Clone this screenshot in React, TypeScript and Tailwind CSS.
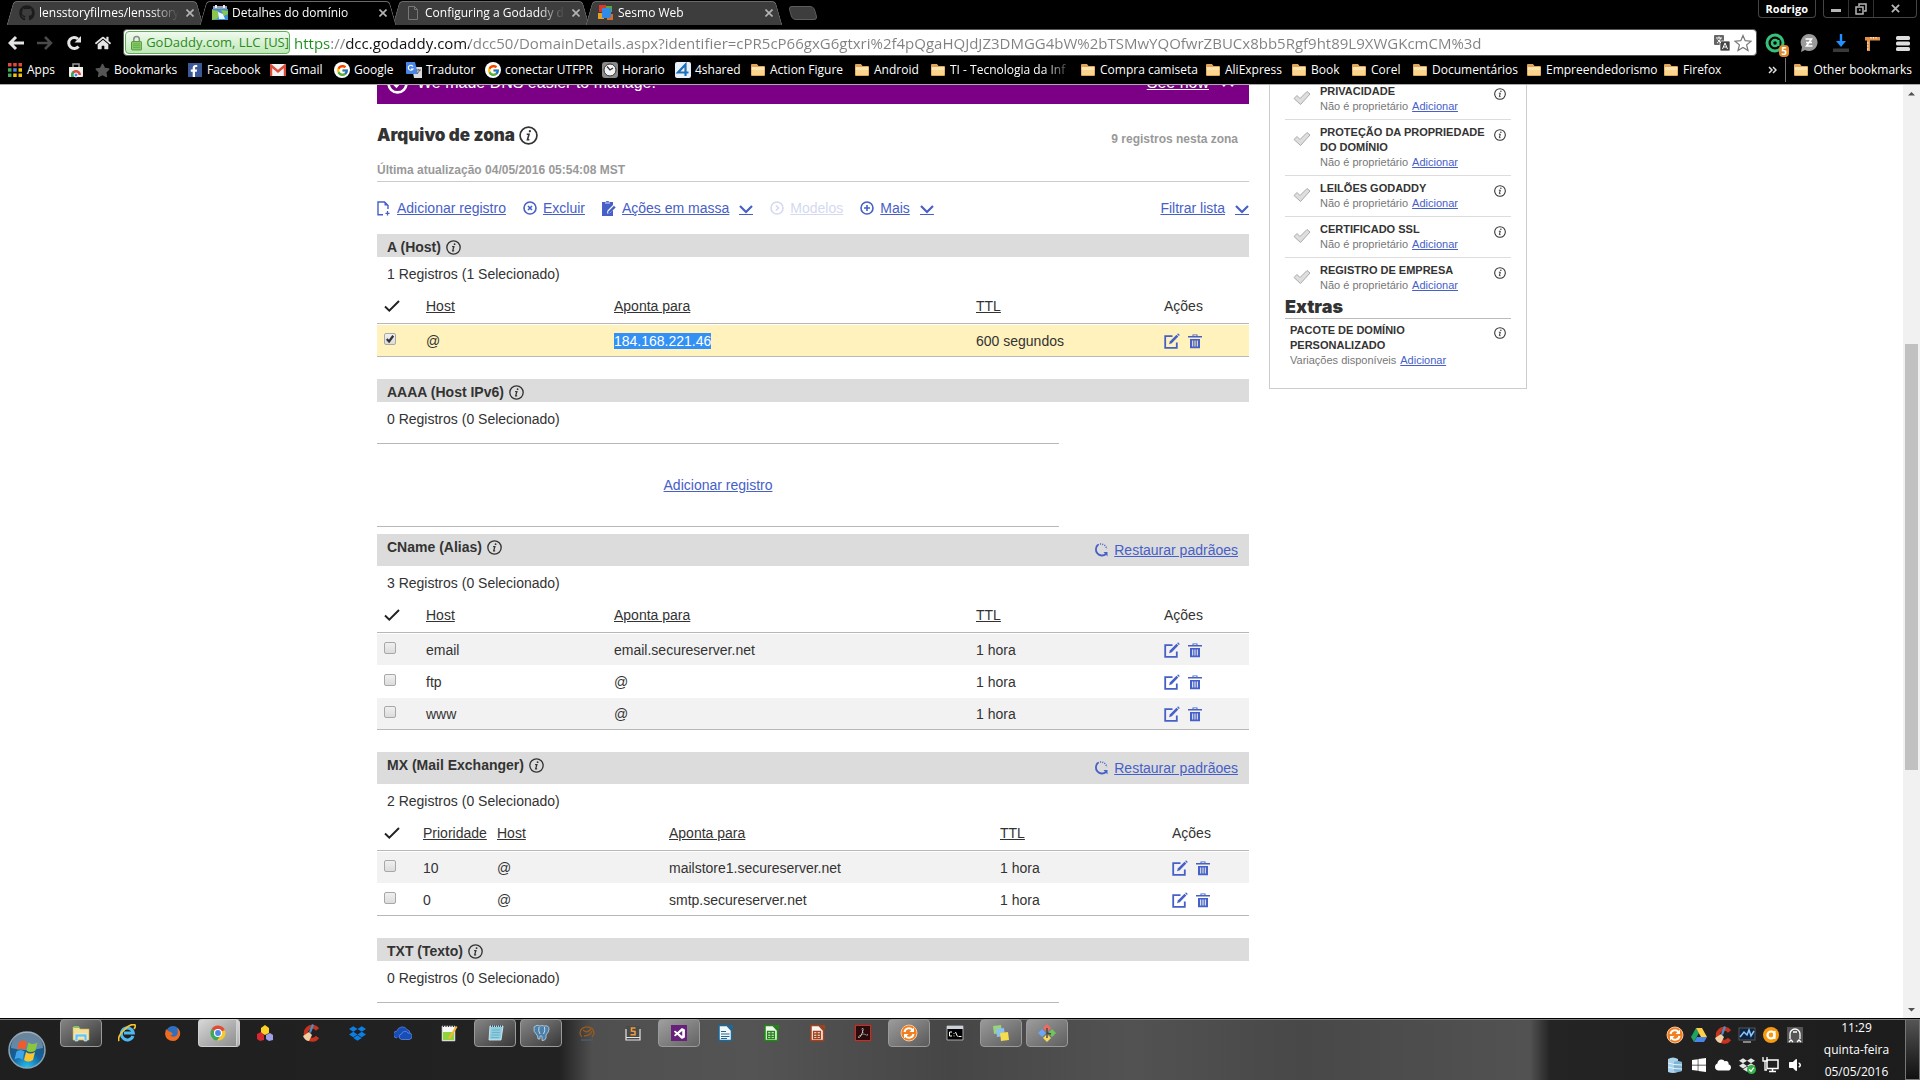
import React from 'react';
import { FaGithub, FaWindows, FaStar, FaFacebookF, FaDropbox, FaHome, FaCloud, FaVolumeDown } from 'react-icons/fa';
import { FcGoogle } from 'react-icons/fc';
import { SiAdobeacrobatreader } from 'react-icons/si';
import { BiLogoVisualStudio } from 'react-icons/bi';

/* ---------- shared icons ---------- */

const Info = ({ className }: { className: string }) => (
  <svg viewBox="0 0 18 18" className={className} fill="none" stroke="#333" aria-hidden="true">
    <circle cx="9" cy="9" r="8" strokeWidth="1.6" />
    <path d="M7.3 7.8h2.2L8 13h1.8" strokeWidth="1.5" />
    <circle cx="10.3" cy="5" r="1.1" fill="#333" stroke="none" />
  </svg>
);

const Chevron = () => (
  <svg viewBox="0 0 14 10" className="mt-1 h-[10px] w-[14px]" fill="none" stroke="currentColor" aria-hidden="true">
    <path d="M1 1l6 6 6-6" strokeWidth="2.2" />
    <path d="M0 9.5h14" strokeWidth="1" />
  </svg>
);

const Edit = () => (
  <svg viewBox="0 0 16 16" className="size-4" fill="none" stroke="#4660c8" aria-hidden="true">
    <path d="M8.5 3.2H1.2v11.6h11.6V9.5" strokeWidth="1.8" />
    <path d="M5 11.3l1-3 6.5-6.5 1.8 1.8L7.8 10.2z" fill="#4660c8" stroke="none" />
    <path d="M13.2 1.2l.8-.9 1.8 1.8-.9.8z" fill="#4660c8" stroke="none" />
  </svg>
);

const Trash = () => (
  <svg viewBox="0 0 14 16" className="h-4 w-[14px]" fill="#4660c8" aria-hidden="true">
    <path d="M4.5 1.5h5V3H14v1.6H0V3h4.5zM5.5 2.3V3h3v-.7z" fillRule="evenodd" />
    <path d="M2 6h10v9.3H2zM4.2 7.5v6h1v-6zm2.3 0v6h1v-6zm2.3 0v6h1v-6z" fillRule="evenodd" />
  </svg>
);

const HeadCheck = () => (
  <svg viewBox="0 0 16 12" className="h-3 w-4" fill="none" stroke="#222" strokeWidth="2" aria-hidden="true">
    <path d="M1 6.5L5.3 10.6 15 1" />
  </svg>
);

const Folder = () => (
  <svg viewBox="0 0 16 16" className="size-4" aria-hidden="true">
    <path d="M1 3q0-1 1-1h5l1.5 2H14q1 0 1 1v8q0 1-1 1H2q-1 0-1-1z" fill="#e0a55a" />
    <path d="M1.8 5h12.4v8H1.8z" fill="#fcd58f" />
    <path d="M1.8 5h12.4v3H1.8z" fill="#fee5b0" />
  </svg>
);

/* ---------- browser tabs ---------- */

const MapIcon = () => (
  <svg viewBox="0 0 16 16" className="size-4" aria-hidden="true">
    <path d="M1 1h14v3H1z" fill="#9aa3ad" />
    <path d="M3 0h2v3H3zM11 0h2v3h-2z" fill="#eef" />
    <path d="M0 4h16v11H0z" fill="#3a8fd8" />
    <path d="M0 5l6 1 2 3-3 5-5 1zM9 5l7 1v3l-4 2z" fill="#8cc34a" />
    <path d="M6 7l5 2 2 5H7z" fill="#e8f4ff" />
  </svg>
);
const PageIcon = () => (
  <svg viewBox="0 0 16 16" className="size-4" fill="none" stroke="#777" aria-hidden="true">
    <path d="M3.5 1.5h6l3 3v10h-9zM9.5 1.5v3h3" />
  </svg>
);
const CubesIcon = () => (
  <svg viewBox="0 0 16 16" className="size-4" aria-hidden="true">
    <path d="M1 0h7v7H1z" fill="#d9382b" />
    <path d="M0 8h6v6H0z" fill="#e8a020" />
    <path d="M9 9h6v6H9z" fill="#e06a1c" />
    <path d="M8 1h6v6H8z" fill="#5aa63a" />
    <rect x="4" y="3" width="9" height="10" rx="1" fill="#2f8be6" />
  </svg>
);

const tabs = [
  { title: 'lensstoryfilmes/lensstoryfil', icon: <FaGithub className="size-4 text-[#1c1c1c]" />, active: false },
  { title: 'Detalhes do domínio', icon: <MapIcon />, active: true },
  { title: 'Configuring a Godaddy do', icon: <PageIcon />, active: false },
  { title: 'Sesmo Web', icon: <CubesIcon />, active: false },
];

const tabShape =
  "relative isolate -mr-[5px] flex h-6 w-[198px] items-center pl-[13px] pr-2 before:absolute before:inset-y-0 before:left-1 before:-z-10 before:w-1/2 before:-skew-x-[16deg] before:rounded-tl before:border-l before:border-t before:border-[#6a6a6a] before:content-[''] after:absolute after:inset-y-0 after:right-1 after:-z-10 after:w-1/2 after:skew-x-[16deg] after:rounded-tr after:border-r after:border-t after:border-[#6a6a6a] after:content-['']";

const TabStrip = () => (
  <div className="flex h-[29px] items-start justify-between pl-[6px] pr-[3px]">
    <div className="flex pt-px" role="tablist">
      {tabs.map((t) => (
        <div
          key={t.title}
          className={
            tabShape +
            (t.active ? ' z-10 before:bg-black after:bg-black' : ' before:bg-[#3d3d3d] after:bg-[#3d3d3d]')
          }
        >
          {t.icon}
          <button
            role="tab"
            aria-selected={t.active}
            className="ml-1 w-[140px] overflow-hidden whitespace-nowrap text-left text-[12px] leading-5 text-white [mask-image:linear-gradient(90deg,#000_80%,transparent)]"
          >
            {t.title}
          </button>
          <button aria-label={'Fechar ' + t.title} className="ml-[7px] text-[#b5b5b5]">
            <svg viewBox="0 0 8 8" className="size-2" stroke="currentColor" strokeWidth="1.6">
              <path d="M.5.5l7 7M7.5.5l-7 7" />
            </svg>
          </button>
        </div>
      ))}
      <button
        aria-label="Nova guia"
        className="ml-3 mt-[5px] h-[14px] w-[26px] skew-x-[16deg] rounded-sm border border-[#5c5c5c] bg-[#3d3d3d]"
      />
    </div>
    <div className="flex gap-[7px]">
      <button className="h-[18px] rounded-b border border-t-0 border-[#444] px-[7px] text-[11px] font-bold leading-4 text-white">
        Rodrigo
      </button>
      <div className="flex h-[18px] divide-x divide-[#333] rounded-b border border-t-0 border-[#444] text-[#b5b5b5]">
        <button aria-label="Minimizar" className="flex w-[25px] items-center justify-center">
          <svg viewBox="0 0 10 10" className="size-[10px]" fill="currentColor">
            <path d="M0 5h10v3H0z" />
          </svg>
        </button>
        <button aria-label="Restaurar" className="flex w-[25px] items-center justify-center">
          <svg viewBox="0 0 12 12" className="size-3" fill="none" stroke="currentColor" strokeWidth="1.5">
            <path d="M4 3V1h7v7H9M1 4h7v7H1z" />
            <path d="M4 7h1.5" />
          </svg>
        </button>
        <button aria-label="Fechar" className="flex w-[42px] items-center justify-center">
          <svg viewBox="0 0 10 10" className="size-[9px]" stroke="currentColor" strokeWidth="2">
            <path d="M1 1l8 8M9 1L1 9" />
          </svg>
        </button>
      </div>
    </div>
  </div>
);

/* ---------- address bar ---------- */

const url =
  'https://dcc.godaddy.com/dcc50/DomainDetails.aspx?identifier=cPR5cP66gxG6gtxri%2f4pQgaHQJdJZ3DMGG4bW%2bTSMwYQOfwrZBUCx8bb5Rgf9ht89L9XWGKcmCM%3d';

const Toolbar = () => (
  <div className="flex h-[27px] items-center">
    <div className="flex w-[123px] items-center gap-[13px] pl-2 text-[#e4e4e4]">
      <button aria-label="Voltar">
        <svg viewBox="0 0 16 16" className="size-4" fill="none" stroke="currentColor" strokeWidth="3">
          <path d="M16 8H3M8 2L2 8l6 6" />
        </svg>
      </button>
      <button aria-label="Avançar" className="text-[#4a4a4a]">
        <svg viewBox="0 0 16 16" className="size-4" fill="none" stroke="currentColor" strokeWidth="2.5">
          <path d="M0 8h13M8 2l6 6-6 6" />
        </svg>
      </button>
      <button aria-label="Recarregar">
        <svg viewBox="0 0 16 16" className="size-4" fill="none" stroke="currentColor" strokeWidth="3">
          <path d="M12.5 11.5A5.5 5.5 0 1 1 12 4" />
          <path d="M15 1v6.500H8.500z" fill="currentColor" stroke="none" />
        </svg>
      </button>
      <button aria-label="Página inicial">
        <FaHome className="size-4" />
      </button>
    </div>
    <div className="flex h-[27px] min-w-0 flex-1 items-center rounded-sm border border-[#555] bg-white pl-px pr-1">
      <button className="flex h-[23px] w-[165px] shrink-0 items-center gap-1 whitespace-nowrap rounded-sm border border-[#5fae5a] bg-linear-to-b from-[#f0faef] to-[#bfe8b8] pl-[5px] text-[13px] text-[#2b8a22]">
        <svg viewBox="0 0 12 16" className="h-4 w-3" aria-hidden="true">
          <path d="M3 7V4a3 3 0 0 1 6 0v3" fill="none" stroke="#8a8a8a" strokeWidth="1.6" />
          <rect x=".5" y="6.5" width="11" height="9" rx="1" fill="#8bd06a" stroke="#4c8f38" />
          <path d="M2 9h8M2 11h8M2 13h8" stroke="#5fa848" />
        </svg>
        GoDaddy.com, LLC [US]
      </button>
      <input
        aria-label="Endereço"
        defaultValue={url}
        className="ml-1 h-6 min-w-0 flex-1 bg-[linear-gradient(90deg,#1a8f1a_0_37px,#808080_37px_52px,#111_52px_175px,#808080_175px)] bg-clip-text text-[15px] text-transparent outline-none"
      />
      <button aria-label="Traduzir" className="mr-1">
        <svg viewBox="0 0 16 16" className="size-4">
          <rect width="10" height="10" rx="1" fill="#666" />
          <rect x="6" y="6" width="10" height="10" rx="1" fill="#444" stroke="#fff" strokeWidth=".7" />
          <path d="M2 3h6M5 1.5V3M3 8c2-1 3-3 3.5-5M3.5 4.5L7 8" stroke="#fff" fill="none" />
          <path d="M8.5 14l2.5-6 2.5 6M9.5 12h3" stroke="#fff" fill="none" />
        </svg>
      </button>
      <button aria-label="Favoritar">
        <svg viewBox="0 0 18 18" className="size-[18px]" fill="none" stroke="#777" strokeWidth="1.2">
          <path d="M9 1.5l2.200 5.200 5.800.5-4.400 3.700 1.400 5.600L9 13.500l-5 3 1.400-5.600L1 7.200l5.800-.5z" />
        </svg>
      </button>
    </div>
    <div className="flex w-[163px] items-center justify-between pl-2 pr-[10px]">
      <button aria-label="Avast" className="relative">
        <svg viewBox="0 0 20 20" className="size-5" fill="none" stroke="#35c178">
          <circle cx="10" cy="10" r="8" strokeWidth="3" />
          <circle cx="10" cy="10" r="3" strokeWidth="2.5" />
          <path d="M13.5 7v6" strokeWidth="2" />
        </svg>
        <span className="absolute -bottom-1 -right-1 h-3 w-[10px] rounded-sm bg-[#e08a2e] text-center text-[10px] font-bold leading-3 text-white">
          5
        </span>
      </button>
      <button aria-label="Zotero">
        <svg viewBox="0 0 18 18" className="size-[18px]">
          <path d="M9 0a8.500 8.500 0 1 1-4 16L1 18l1-5A8.500 8.500 0 0 1 9 0z" fill="#9a9a9a" />
          <path d="M5.500 5h6l-5 7h6M6 8.500h6" stroke="#fff" strokeWidth="1.6" fill="none" />
        </svg>
      </button>
      <button aria-label="Downloads">
        <svg viewBox="0 0 16 18" className="h-[18px] w-4">
          <path d="M6.800 0h2.400v7H13l-5 6-5-6h3.800z" fill="#1e90ff" />
          <path d="M0 14.500h16V18H0z" fill="#3a3a3a" />
        </svg>
      </button>
      <button aria-label="Régua">
        <svg viewBox="0 0 18 18" className="size-[18px]">
          <path d="M2 3h15v3.500H7V17H4V6.500H2z" fill="#e09347" />
          <path d="M8 3v1.500M10.500 3v1.500M13 3v1.500M4 9h1.500M4 12h1.500M4 15h1.500" stroke="#fff" />
        </svg>
      </button>
      <button aria-label="Menu">
        <svg viewBox="0 0 14 16" className="h-4 w-[14px]" fill="#dedede">
          <rect y="1" width="14" height="4" rx="1.5" />
          <rect y="6.500" width="14" height="4" rx="1.5" />
          <rect y="12" width="14" height="4" rx="1.5" />
        </svg>
      </button>
    </div>
  </div>
);

/* ---------- bookmarks ---------- */

const AppsIcon = () => (
  <svg viewBox="0 0 14 14" className="size-[14px]" aria-hidden="true">
    <path d="M0 0h3.500v3.500H0zM5.200 0h3.500v3.500H5.200zM10.500 0H14v3.500h-3.500z" fill="#e5493a" />
    <path d="M0 5.200h3.500v3.500H0z" fill="#3fae5a" />
    <path d="M5.200 5.200h3.500v3.500H5.200z" fill="#4a86e8" />
    <path d="M10.500 5.200H14v3.500h-3.500zM5.200 10.500h3.500V14H5.200zM10.500 10.500H14V14h-3.500z" fill="#f4c20d" />
    <path d="M0 10.500h3.500V14H0z" fill="#3fae5a" />
  </svg>
);
const StoreIcon = () => (
  <svg viewBox="0 0 16 16" className="size-4" aria-hidden="true">
    <path d="M1 5h14v9q0 1-1 1H2q-1 0-1-1z" fill="#eee" />
    <path d="M5 5V2h6v3" fill="none" stroke="#999" strokeWidth="1.5" />
    <path d="M3 13a5 5 0 0 1 10 0z" fill="#de4c3c" />
    <path d="M3 15v-2a5 5 0 0 1 2-4l2 6z" fill="#39a657" />
    <circle cx="8" cy="13" r="2" fill="#4a86e8" stroke="#fff" />
  </svg>
);
const GmailIcon = () => (
  <svg viewBox="0 0 16 12" className="h-3 w-4" aria-hidden="true">
    <path d="M0 0h16v12H0z" fill="#f3f3f3" />
    <path d="M1 12V1.500l7 6 7-6V12" fill="none" stroke="#dd4b39" strokeWidth="2.400" />
  </svg>
);
const GoogleIcon = () => (
  <span className="flex size-4 items-center justify-center rounded-full bg-white">
    <FcGoogle className="size-[13px]" />
  </span>
);
const TranslateIcon = () => (
  <svg viewBox="0 0 16 16" className="size-4" aria-hidden="true">
    <path d="M6 5h10v11H8z" fill="#dcdcdc" />
    <path d="M0 0h9l3 12H1q-1 0-1-1z" fill="#4a86e8" />
    <path d="M7 4.500a2.500 2.500 0 1 0 0 2.500H5" fill="none" stroke="#fff" strokeWidth="1.200" />
    <path d="M10 8h5M12.500 7v1M11 12l3-4" stroke="#666" fill="none" />
  </svg>
);
const ClockIcon = () => (
  <svg viewBox="0 0 16 16" className="size-4" aria-hidden="true">
    <rect width="16" height="16" rx="3" fill="#8a8a8a" />
    <circle cx="8" cy="8" r="6" fill="#f3f3f3" stroke="#333" />
    <path d="M5 4.500L8 8l3-2" fill="none" stroke="#333" strokeWidth="1.300" />
  </svg>
);
const FourIcon = () => (
  <svg viewBox="0 0 16 16" className="size-4" aria-hidden="true">
    <rect width="16" height="16" rx="2" fill="#e8f1fa" />
    <path d="M10.500 14V2.500L3 10.500h10.500" fill="none" stroke="#1f6fb8" strokeWidth="2.200" />
  </svg>
);

const bookmarks = [
  { t: 'Apps', w: 'w-[61px]', i: <AppsIcon /> },
  { t: '', w: 'w-[26px]', i: <StoreIcon /> },
  { t: 'Bookmarks', w: 'w-[93px]', i: <FaStar className="size-[15px] text-[#555]" /> },
  {
    t: 'Facebook',
    w: 'w-[83px]',
    i: (
      <span className="flex size-[14px] items-end justify-end bg-[#3b5998] pr-[2px]">
        <FaFacebookF className="size-3 text-white" />
      </span>
    ),
  },
  { t: 'Gmail', w: 'w-[64px]', i: <GmailIcon /> },
  { t: 'Google', w: 'w-[72px]', i: <GoogleIcon /> },
  { t: 'Tradutor', w: 'w-[79px]', i: <TranslateIcon /> },
  { t: 'conectar UTFPR', w: 'w-[117px]', i: <GoogleIcon /> },
  { t: 'Horario', w: 'w-[73px]', i: <ClockIcon /> },
  { t: '4shared', w: 'w-[75px]', i: <FourIcon /> },
  { t: 'Action Figure', w: 'w-[104px]', i: <Folder /> },
  { t: 'Android', w: 'w-[76px]', i: <Folder /> },
  { t: 'TI - Tecnologia da Inf', w: 'w-[150px]', i: <Folder />, fade: true },
  { t: 'Compra camiseta', w: 'w-[125px]', i: <Folder /> },
  { t: 'AliExpress', w: 'w-[86px]', i: <Folder /> },
  { t: 'Book', w: 'w-[60px]', i: <Folder /> },
  { t: 'Corel', w: 'w-[61px]', i: <Folder /> },
  { t: 'Documentários', w: 'w-[114px]', i: <Folder /> },
  { t: 'Empreendedorismo', w: 'w-[137px]', i: <Folder /> },
  { t: 'Firefox', w: 'w-[70px]', i: <Folder /> },
];

const Bookmarks = () => (
  <nav aria-label="Favoritos" className="flex h-7 items-center justify-between pl-[7px] pr-2 text-[12px] text-white">
    <div className="flex min-w-0 overflow-hidden">
      {bookmarks.map((b, n) => (
        <a
          key={n}
          href="#"
          aria-label={b.t || 'Chrome Web Store'}
          className={'flex shrink-0 items-center gap-1 whitespace-nowrap ' + b.w}
        >
          <span className="flex w-4 shrink-0 justify-center">{b.i}</span>
          <span className={b.fade ? 'w-[124px] overflow-hidden [mask-image:linear-gradient(90deg,#000_75%,transparent)]' : ''}>
            {b.t}
          </span>
        </a>
      ))}
    </div>
    <div className="flex shrink-0 items-center">
      <button aria-label="Mais favoritos" className="mr-2 text-[#e0e0e0]">
        <svg viewBox="0 0 9 8" className="h-2 w-[9px]" fill="none" stroke="currentColor" strokeWidth="1.5">
          <path d="M1 1l3 3-3 3M5 1l3 3-3 3" />
        </svg>
      </button>
      <a href="#" className="flex items-center gap-1 whitespace-nowrap border-l border-[#777] pl-[7px] leading-6">
        <Folder />
        Other bookmarks
      </a>
    </div>
  </nav>
);

/* ---------- zone file ---------- */

type Section = {
  title: string;
  total: number;
  selected: number;
  restore?: boolean;
  cols: { label: string; w: string }[];
  rows: string[][];
};

const hostCols = [
  { label: 'Host', w: 'w-[188px]' },
  { label: 'Aponta para', w: 'w-[362px]' },
  { label: 'TTL', w: 'w-[188px]' },
];

const sections: Section[] = [
  { title: 'A (Host)', total: 1, selected: 1, cols: hostCols, rows: [['@', '184.168.221.46', '600 segundos']] },
  { title: 'AAAA (Host IPv6)', total: 0, selected: 0, cols: [], rows: [] },
  {
    title: 'CName (Alias)',
    total: 3,
    selected: 0,
    restore: true,
    cols: hostCols,
    rows: [
      ['email', 'email.secureserver.net', '1 hora'],
      ['ftp', '@', '1 hora'],
      ['www', '@', '1 hora'],
    ],
  },
  {
    title: 'MX (Mail Exchanger)',
    total: 2,
    selected: 0,
    restore: true,
    cols: [
      { label: 'Prioridade', w: 'w-[74px]' },
      { label: 'Host', w: 'w-[172px]' },
      { label: 'Aponta para', w: 'w-[331px]' },
      { label: 'TTL', w: 'w-[172px]' },
    ],
    rows: [
      ['10', '@', 'mailstore1.secureserver.net', '1 hora'],
      ['0', '@', 'smtp.secureserver.net', '1 hora'],
    ],
  },
  { title: 'TXT (Texto)', total: 0, selected: 0, cols: [], rows: [] },
];

const Check = ({ label, checked }: { label: string; checked: boolean }) => (
  <label className="relative ml-[7px] block size-3">
    <input
      type="checkbox"
      aria-label={label}
      defaultChecked={checked}
      className="peer block size-3 appearance-none rounded-[2px] border border-[#a8a8a8] bg-linear-to-b from-[#f0f0f0] to-[#dcdcdc]"
    />
    <svg
      viewBox="0 0 13 13"
      className="pointer-events-none absolute inset-0 hidden size-3 peer-checked:block"
      fill="none"
      stroke="#333"
      strokeWidth="2.4"
    >
      <path d="M3 6.5l2.500 2.700L10 3" />
    </svg>
  </label>
);

const RecordTable = ({ s }: { s: Section }) => {
  const mx = s.cols.length === 4;
  return (
    <table className="w-full table-fixed border-separate border-spacing-0 border-b border-[#b8b8b8] text-left">
      <thead>
        <tr className="h-[35px]">
          <th className={'border-b border-[#b8b8b8] pl-[7px] ' + (mx ? 'w-[46px]' : 'w-[49px]')} aria-label="Selecionar">
            <HeadCheck />
          </th>
          {s.cols.map((c) => (
            <th key={c.label} className={'border-b border-[#b8b8b8] font-normal ' + c.w}>
              <a href="#" className="underline">{c.label}</a>
            </th>
          ))}
          <th className="border-b border-[#b8b8b8] font-normal">Ações</th>
        </tr>
      </thead>
      <tbody>
        {s.rows.map((r, i) => {
          const sel = i < s.selected;
          return (
            <tr key={i} className={'h-8 *:border-t *:border-white ' + (sel ? 'bg-[#fff2bd]' : i % 2 === 0 ? 'bg-[#f2f2f2]' : 'bg-white')}>
              <td className="pb-1">
                <Check label={'Selecionar ' + r.join(' ')} checked={sel} />
              </td>
              {r.map((v, k) => (
                <td key={k}>{sel && k === 1 ? <span className="bg-[#3390f5] text-white">{v}</span> : v}</td>
              ))}
              <td>
                <div className="flex items-center gap-2">
                  <button aria-label="Editar"><Edit /></button>
                  <button aria-label="Excluir"><Trash /></button>
                </div>
              </td>
            </tr>
          );
        })}
      </tbody>
    </table>
  );
};

const SectionBlock = ({ s }: { s: Section }) => (
  <section className={s.rows.length ? 'mb-[22px]' : 'mb-[7px]'}>
    <div className={'flex items-start justify-between bg-[#dcdcdc] pl-[10px] pr-[11px] ' + (s.restore ? 'h-8' : 'h-[23px]')}>
      <h3 className="flex items-center gap-[5px] pt-[3px] font-bold">
        {s.title}
        <Info className="size-[15px]" />
      </h3>
      {s.restore && (
        <button className="flex items-center gap-[6px] pt-[6px] text-[#4660c8]">
          <svg viewBox="0 0 14 14" className="size-[14px]" fill="none" stroke="currentColor" aria-hidden="true">
            <path d="M4 1.800A6 6 0 1 0 12 11" strokeWidth="1.800" />
            <path d="M4 1.800A6 6 0 0 1 12.800 6" strokeWidth="1.500" strokeDasharray="1 1.200" />
            <path d="M9.500 9h4v4.500z" fill="currentColor" stroke="none" />
          </svg>
          <span className="underline">Restaurar padrãoes</span>
        </button>
      )}
    </div>
    <p className={'pl-[10px] pt-[7px] ' + (s.rows.length ? 'h-8' : 'h-[41px]')}>
      {s.total} Registros ({s.selected} Selecionado)
    </p>
    {s.rows.length ? (
      <RecordTable s={s} />
    ) : (
      <div className="mr-[190px] flex h-[84px] items-center justify-center border-y border-[#b8b8b8]">
        <a href="#" className="text-[#4660c8] underline">Adicionar registro</a>
      </div>
    )}
  </section>
);

const ZoneFile = () => (
  <main className="min-w-0 flex-1 text-[14px] leading-5 text-[#333]">
    <div className="flex h-[19px] items-end justify-between overflow-hidden bg-[#7b0085] pb-[9px] pl-[10px] pr-[15px] text-[16px] leading-6 text-white">
      <div className="flex items-center gap-[9px]">
        <svg viewBox="0 0 20 20" className="size-[21px]" fill="none" stroke="#fff" aria-hidden="true">
          <circle cx="10" cy="10" r="8.5" strokeWidth="2.5" />
          <path d="M6 10l3 3 5-6" strokeWidth="2" />
        </svg>
        We made DNS easier to manage.
      </div>
      <div className="flex items-center gap-[13px]">
        <a href="#" className="underline">See now</a>
        <button aria-label="Dispensar" className="mb-1">
          <svg viewBox="0 0 12 12" className="size-3" stroke="#fff" strokeWidth="2.5">
            <path d="M1 1l10 10M11 1L1 11" />
          </svg>
        </button>
      </div>
    </div>
    <header className="flex h-[78px] flex-col justify-between border-b border-[#ccc] pb-px pt-[19px]">
      <div className="flex items-center justify-between">
        <h1 className="flex items-center gap-1 font-['Inter'] text-[17px] font-black leading-6">
          Arquivo de zona
          <Info className="size-[19px]" />
        </h1>
        <span className="mt-2 pr-[11px] text-[12px] font-bold leading-4 text-[#999]">9 registros nesta zona</span>
      </div>
      <p className="text-[12px] font-bold text-[#999]">Última atualização 04/05/2016 05:54:08 MST</p>
    </header>
    <div className="flex h-[52px] items-center justify-between text-[#4660c8]">
      <div className="flex items-center gap-[17px]">
        <button className="flex items-center gap-[7px]">
          <svg viewBox="0 0 13 15" className="h-[15px] w-[13px]" fill="none" stroke="currentColor" aria-hidden="true">
            <path d="M6 13.800H1V1h6.500L11 4.500V8" strokeWidth="1.400" />
            <path d="M7.500.5v4h4z" fill="currentColor" stroke="none" />
            <path d="M10.500 10v4.500M8.500 12.300h4" strokeWidth="1.300" />
          </svg>
          <span className="underline">Adicionar registro</span>
        </button>
        <button className="flex items-center gap-[6px]">
          <svg viewBox="0 0 14 14" className="size-[14px]" fill="none" stroke="currentColor" strokeWidth="1.6" aria-hidden="true">
            <circle cx="7" cy="7" r="6" />
            <path d="M5 5l4 4M9 5L5 9" />
          </svg>
          <span className="underline">Excluir</span>
        </button>
        <button className="flex items-center gap-[6px]">
          <svg viewBox="0 0 14 15" className="h-[15px] w-[14px]" fill="currentColor" aria-hidden="true">
            <path d="M0 1h3.500q.5-1 2-1t2 1H11v3L5.500 9.500 5 12.500l3-.5 3-3v6H0z" />
            <path d="M6.500 10.200L12 4.700l1.700 1.700-5.500 5.400-2.200.5z" />
            <path d="M3 2h5" stroke="#fff" strokeWidth=".8" />
          </svg>
          <span className="mr-1 underline">Ações em massa</span>
          <Chevron />
        </button>
        <button disabled className="flex items-center gap-[6px] text-[#d3daf1]">
          <svg viewBox="0 0 14 14" className="size-[14px]" fill="none" stroke="currentColor" strokeWidth="1.6" aria-hidden="true">
            <circle cx="7" cy="7" r="6" />
            <path d="M6 4.500L8.500 7 6 9.500" />
          </svg>
          <span className="underline">Modelos</span>
        </button>
        <button className="flex items-center gap-[6px]">
          <svg viewBox="0 0 14 14" className="size-[14px]" fill="none" stroke="currentColor" strokeWidth="1.6" aria-hidden="true">
            <circle cx="7" cy="7" r="6" />
            <path d="M7 4v6M4 7h6" />
          </svg>
          <span className="mr-1 underline">Mais</span>
          <Chevron />
        </button>
      </div>
      <button className="flex items-center gap-[10px]">
        <span className="underline">Filtrar lista</span>
        <Chevron />
      </button>
    </div>
    {sections.map((s) => (
      <SectionBlock key={s.title} s={s} />
    ))}
  </main>
);

/* ---------- sidebar ---------- */

const products = ['PRIVACIDADE', 'PROTEÇÃO DA PROPRIEDADE DO DOMÍNIO', 'LEILÕES GODADDY', 'CERTIFICADO SSL', 'REGISTRO DE EMPRESA'];

const Sidebar = () => (
  <aside className="-mt-[6px] w-[258px] shrink-0 self-start border border-t-0 border-[#ccc] px-[15px] pb-5 text-[11px] leading-[15px] text-[#777]">
    <ul className="divide-y divide-[#ddd]">
      {products.map((p) => (
        <li key={p} className="flex items-start py-[5px] last:pb-0">
          <svg viewBox="0 0 18 16" className="ml-2 mr-[9px] mt-[6px] h-4 w-[18px] shrink-0" aria-hidden="true">
            <path d="M1 8.500L4 5.500l3 3L14 1.500l3 2.500L7.500 14.500z" fill="#dedede" stroke="#aaa" />
          </svg>
          <div className="flex-1">
            <h4 className="whitespace-pre-line font-bold text-[#333]">{p.replace(' DO DOMÍNIO', '\nDO DOMÍNIO')}</h4>
            <p>
              Não é proprietário <a href="#" className="ml-px text-[#4660c8] underline">Adicionar</a>
            </p>
          </div>
          <Info className="mr-[5px] mt-1 size-3 shrink-0" />
        </li>
      ))}
    </ul>
    <h2 className="mt-[3px] border-b border-[#bbb] font-['Inter'] text-[18px] font-black leading-[22px] text-[#333]">Extras</h2>
    <div className="flex items-start pl-[5px] pt-1">
      <div className="flex-1">
        <h4 className="font-bold text-[#333]">
          PACOTE DE DOMÍNIO
          <br />
          PERSONALIZADO
        </h4>
        <p>
          Variações disponíveis <a href="#" className="ml-px text-[#4660c8] underline">Adicionar</a>
        </p>
      </div>
      <Info className="mr-[5px] mt-1 size-3 shrink-0" />
    </div>
  </aside>
);

const Scrollbar = () => (
  <div className="flex w-[17px] shrink-0 flex-col items-center justify-between bg-[#f1f1f1]" aria-hidden="true">
    <svg viewBox="0 0 17 17" className="size-[17px]" fill="#505050">
      <path d="M5 10.500h7L8.500 7z" />
    </svg>
    <div className="mt-[242px] w-[13px] basis-[426px] bg-[#c1c1c1]" />
    <div className="flex-1" />
    <svg viewBox="0 0 17 17" className="size-[17px]" fill="#505050">
      <path d="M5 7h7l-3.500 3.500z" />
    </svg>
  </div>
);

/* ---------- taskbar ---------- */

const S = ({ children }: { children: React.ReactNode }) => (
  <svg viewBox="0 0 18 18" className="size-[18px]" aria-hidden="true">
    {children}
  </svg>
);

const Doc = ({ c, grid }: { c: string; grid: boolean }) => (
  <S>
    <path d="M3 1.500h8l4.500 5V16.500H3z" fill="#f5f5f5" stroke={c} strokeWidth="1.500" />
    <path d="M12 1h5v5z" fill={c} />
    {grid ? (
      <path d="M5.500 7.500h7v7h-7zM5.500 10h7M5.500 12.300h7M9 7.500v7" fill="none" stroke={c} strokeWidth="1.300" />
    ) : (
      <path d="M5 7.500h5M5 10h8.500M5 12.500h8.500M5 14.500h6" stroke={c} strokeWidth="1.200" />
    )}
  </S>
);

const Sync = () => (
  <S>
    <circle cx="9" cy="9" r="8" fill="#f07f22" stroke="#f8c79a" />
    <path d="M4.500 8a4.500 4.500 0 0 1 8-2M13.500 10a4.500 4.500 0 0 1-8 2" fill="none" stroke="#fff" strokeWidth="2" />
    <path d="M14 3.500v4.500H9.500zM4 14.500V10h4.500z" fill="#fff" />
  </S>
);

const CCleaner = () => (
  <S>
    <path d="M15.500 5.500A6.500 6.500 0 1 0 15.500 13" fill="none" stroke="#c8331f" strokeWidth="4" />
    <path d="M10 0l2 1-3 8-2-1z" fill="#4a8fc8" />
    <path d="M1 12l6-4 3 3-3 6q-4 0-6-5z" fill="#f0cfa5" />
  </S>
);

const apps: { name: string; open?: boolean; bright?: boolean; icon: React.ReactNode }[] = [
  {
    name: 'Explorer',
    open: true,
    icon: (
      <S>
        <path d="M1 3h6l1 2h9v11H1z" fill="#f3e19a" stroke="#c9a94e" strokeWidth=".6" />
        <path d="M2 2h5v2H2z" fill="#7cc36a" />
        <path d="M3 17v-7h12v7h-3v-4H6v4z" fill="#6cc3ef" stroke="#e8f8ff" strokeWidth=".6" />
      </S>
    ),
  },
  {
    name: 'Internet Explorer',
    icon: (
      <S>
        <path d="M15 12A6 6 0 1 1 15.300 9H6" fill="none" stroke="#4db9f0" strokeWidth="3" />
        <path d="M1 17Q-1 13 6 6T17 1q1 1-1 4" fill="none" stroke="#f5c32c" strokeWidth="1.700" />
      </S>
    ),
  },
  {
    name: 'Firefox',
    icon: (
      <S>
        <circle cx="9" cy="9" r="7" fill="#2f6fc0" />
        <path d="M2 5q2 3 5 3l2 2q-2 2-3 1 2 3 6 1 3-2 1-8 4 3 3 7-2 6-7 6-7 0-8-7z" fill="#ee6b1f" />
      </S>
    ),
  },
  {
    name: 'Chrome',
    open: true,
    bright: true,
    icon: (
      <S>
        <circle cx="9" cy="9" r="7.500" fill="#f7c92e" />
        <path d="M9 9L2.500 5.200A7.500 7.500 0 0 1 15.800 6z" fill="#dd4b3e" />
        <path d="M9 9L2.500 5.200A7.500 7.500 0 0 0 8 16.500L12 11z" fill="#3fa65a" />
        <circle cx="9" cy="9" r="3.500" fill="#4a86e8" stroke="#fff" strokeWidth="1.200" />
      </S>
    ),
  },
  {
    name: 'Cubos',
    icon: (
      <S>
        <path d="M5 4l4-3 4 3v5L9 11 5 9z" fill="#fbd327" />
        <path d="M1 10l4-2 3 3v5l-4 1-3-2z" fill="#d7282f" />
        <path d="M10 11l4-2 3 2v5l-4 1-3-2z" fill="#9fa0e8" />
      </S>
    ),
  },
  { name: 'CCleaner', icon: <CCleaner /> },
  { name: 'Dropbox', icon: <FaDropbox className="size-[17px] text-[#0b7fe6]" /> },
  {
    name: 'OneDrive',
    icon: (
      <S>
        <path d="M3 14a3.500 3.500 0 0 1 0-7 5.500 5.500 0 0 1 10-1.500q3 .5 3 4" fill="#164db8" stroke="#5f86d8" strokeWidth=".7" />
        <path d="M7.500 15.500a2.800 2.800 0 0 1 0-5.500 3.600 3.600 0 0 1 6.500-1 3 3 0 0 1 1.500 6.500z" fill="#164db8" stroke="#6f95e0" strokeWidth=".7" />
      </S>
    ),
  },
  {
    name: 'Notepad++',
    icon: (
      <S>
        <path d="M2 2h13v15H2z" fill="#f8f8f8" stroke="#aaa" strokeWidth=".7" />
        <path d="M3 8h11v8H3z" fill="#8ed43c" />
        <path d="M3 2h11" stroke="#333" strokeWidth="2" strokeDasharray="1 1.500" />
        <path d="M8 14l8-12 1.500 1L10 15z" fill="#f4b92c" />
      </S>
    ),
  },
  {
    name: 'Bloco de notas',
    open: true,
    icon: (
      <S>
        <path d="M4 2h13l-2 14H3z" fill="#8fcde0" stroke="#dff5fb" strokeWidth=".8" />
        <path d="M5 2h11" stroke="#456" strokeWidth="2" strokeDasharray="1 1" />
        <path d="M6 6h8M6 8.500h8M5.500 11h8M5 13.500h8" stroke="#5fa6bd" strokeWidth=".7" />
      </S>
    ),
  },
  {
    name: 'PostgreSQL',
    open: true,
    icon: (
      <S>
        <path
          d="M2 3q3-3 6-1 2-1 4 0 5-1 5 3 0 3-3 6v3q-1 3-4 2.500V12H8v3H6q0-2-1-4Q1 8 2 3z"
          fill="#4d7fa8"
          stroke="#b9d6ea"
          strokeWidth=".8"
        />
        <path d="M7 3q-1 4 1 7M12.500 3q1 4-1 7" fill="none" stroke="#cfe3f0" strokeWidth=".9" />
      </S>
    ),
  },
  {
    name: 'SQuirreL',
    icon: (
      <S>
        <path d="M4 13A7 6 0 1 1 14 13M5 6q4 4 8-1M6 12q6 0 8-5" fill="none" stroke="#9a5a1c" strokeWidth="1.300" />
        <path d="M3 16h12" stroke="#4b5a68" strokeWidth="1.600" />
      </S>
    ),
  },
  {
    name: 'Sublime Text',
    icon: (
      <S>
        <rect x="2" y="2" width="14" height="14" rx="1" fill="#4a4a4a" />
        <path d="M2 5v11h14V5M2 13.500h14" fill="none" stroke="#e4e4e4" strokeWidth="1.200" />
        <path d="M11.500 4H7.500v3l3.500.5v3.300H6.500" fill="none" stroke="#f09b3a" strokeWidth="1.600" />
      </S>
    ),
  },
  {
    name: 'Visual Studio',
    open: true,
    icon: (
      <span className="flex size-4 items-center justify-center bg-[#68217a]">
        <BiLogoVisualStudio className="size-[13px] text-white" />
      </span>
    ),
  },
  { name: 'Writer', icon: <Doc c="#1a6a9c" grid={false} /> },
  { name: 'Calc', icon: <Doc c="#1f8a12" grid /> },
  { name: 'Impress', icon: <Doc c="#a8401a" grid /> },
  {
    name: 'Acrobat Reader',
    icon: (
      <span className="flex size-4 items-center justify-center border border-[#e2231a] bg-[#2a0a0a]">
        <SiAdobeacrobatreader className="size-[10px] text-[#e8e8e8]" />
      </span>
    ),
  },
  { name: 'Sincronização', open: true, icon: <Sync /> },
  {
    name: 'Prompt de comando',
    icon: (
      <S>
        <path d="M1 2h16v14H1z" fill="#000" stroke="#aaa" />
        <path d="M1 2h16v3H1z" fill="#c9d2da" />
        <path d="M6 8H3.500v4H6M8 9v.8M8 11.500v.8M9.500 8l2 4.500M12.500 12.500h3" fill="none" stroke="#fff" />
      </S>
    ),
  },
  {
    name: 'Notas autoadesivas',
    open: true,
    icon: (
      <S>
        <path d="M1 2l8-1 1 8-8 1z" fill="#9bd37a" />
        <path d="M4 5l8-1 1 8-8 1z" fill="#8cc0f0" />
        <path d="M8 9l8-1 1 8-8 1z" fill="#f6dd4e" />
      </S>
    ),
  },
  {
    name: 'Git',
    open: true,
    icon: (
      <S>
        <path d="M9 0l4 4-4 4-4-4z" fill="#ef6a60" />
        <path d="M4 5l4 4-4 4-4-4z" fill="#6ba6f4" />
        <path d="M14 5l4 4-4 4-4-4z" fill="#6fc45c" />
        <path d="M9 10l4 4-4 4-4-4z" fill="#f3da5b" />
        <path d="M9 4v10M9 9l4 1" stroke="#444" strokeWidth="1.400" />
      </S>
    ),
  },
];

const tray: { name: string; icon: React.ReactNode }[] = [
  { name: 'Sincronização', icon: <Sync /> },
  {
    name: 'Google Drive',
    icon: (
      <S>
        <path d="M6 2L1 11l3 5 5-9z" fill="#1ea362" />
        <path d="M6 2h6l5 9h-6z" fill="#ffcf48" />
        <path d="M7 11h10l-3 5H4z" fill="#4a86e8" />
      </S>
    ),
  },
  { name: 'CCleaner', icon: <CCleaner /> },
  {
    name: 'Monitor',
    icon: (
      <S>
        <rect x="1" y="2" width="16" height="12" fill="#0d2440" stroke="#555" />
        <path d="M2 11l4-5 3 3 2-5 2 6 3-5" stroke="#8cc8ff" fill="none" strokeWidth="1.500" />
        <path d="M5 16h8" stroke="#aaa" strokeWidth="1.500" />
      </S>
    ),
  },
  {
    name: 'Avast',
    icon: (
      <S>
        <circle cx="9" cy="9" r="8" fill="#f79a10" />
        <circle cx="9" cy="9" r="3.500" fill="none" stroke="#fff" strokeWidth="2.200" />
        <path d="M12.500 5v8" stroke="#fff" strokeWidth="2.200" />
      </S>
    ),
  },
  {
    name: 'Foobar',
    icon: (
      <S>
        <rect x="1" y="1" width="16" height="16" fill="#555" />
        <path d="M4 13V8a5 5 0 0 1 10 0v5M3 16l2-2 2 2M11 16l2-2 2 2M7 6h4" stroke="#fff" fill="none" strokeWidth="1.300" />
      </S>
    ),
  },
  {
    name: 'Banco de dados',
    icon: (
      <S>
        <path d="M2 3q5-3 10 0v13q-5 2-10 0z" fill="#a9d3ec" />
        <path d="M8 6q4-2 8 0v9q-4 2-8 0z" fill="#7fb3d2" />
        <path d="M2 7q5 2 14 2M2 11q5 2 14 2" stroke="#e6f4fb" fill="none" />
      </S>
    ),
  },
  { name: 'Windows', icon: <FaWindows className="size-4 text-white" /> },
  { name: 'OneDrive', icon: <FaCloud className="size-4 text-white" /> },
  {
    name: 'Dropbox',
    icon: (
      <span className="relative">
        <FaDropbox className="size-4 text-[#e6e6e6]" />
        <svg viewBox="0 0 10 10" className="absolute -bottom-px -right-px size-[9px]">
          <circle cx="5" cy="5" r="5" fill="#35b24a" />
          <path d="M2.500 5l2 2 3-4" stroke="#fff" fill="none" strokeWidth="1.400" />
        </svg>
      </span>
    ),
  },
  {
    name: 'Rede',
    icon: (
      <S>
        <path d="M5 4h11v8.500H5zM7 15.500h7M10.500 13v2.500" fill="none" stroke="#fff" strokeWidth="1.500" />
        <path d="M1 1v4h4V1M3 5v9h2" fill="none" stroke="#fff" strokeWidth="1.300" />
      </S>
    ),
  },
  { name: 'Volume', icon: <FaVolumeDown className="size-4 text-white" /> },
];

const Taskbar = () => (
  <footer className="flex h-[62px] items-stretch border-t border-black bg-[linear-gradient(90deg,#1f1f1f_0,#222_560px,#4f4f4f_592px,#545454_750px,#464646_950px,#525252_1130px,#484848_1300px,#525252_1530px,#242424_1550px,#1c1c1c_100%)] shadow-[inset_0_1px_0_#7d7d7d]">
    <button aria-label="Iniciar" className="ml-2 mt-3 size-[38px] shrink-0">
      <svg viewBox="0 0 38 38" className="size-[38px]">
        <defs>
          <radialGradient id="orb" cx=".5" cy="1" r=".9">
            <stop offset="0" stopColor="#28c4f5" />
            <stop offset=".5" stopColor="#12619c" />
            <stop offset="1" stopColor="#2b4f6f" />
          </radialGradient>
        </defs>
        <circle cx="19" cy="19" r="18" fill="url(#orb)" stroke="#8fa4b3" strokeWidth="1.500" />
        <path d="M3 17A16 16 0 0 1 35 17Q19 21 3 17z" fill="#fff" opacity=".3" />
        <path d="M11 11q4-3 8 0l-2 8q-4-3-8 0z" fill="#ef5b2a" />
        <path d="M20.500 11.500q4 3 9 0l-2 8q-5 3-9 0z" fill="#8cc63e" />
        <path d="M8.500 20.500q4-3 8 0l-2 8q-4-3-8 0z" fill="#3fa4e8" />
        <path d="M18 21q4 3 9 0l-2 8q-5 3-9 0z" fill="#fcc42c" />
      </svg>
    </button>
    <div className="ml-[14px] flex flex-1 gap-1">
      {apps.map((a) => (
        <button
          key={a.name}
          aria-label={a.name}
          className={
            'flex h-7 w-[42px] items-center justify-center ' +
            (a.bright
              ? 'rounded-sm border border-r-4 border-double border-[#d0d0d0] bg-linear-to-br from-[#d8d8d8] to-[#8e8e8e]'
              : a.open
                ? 'rounded-sm border border-[#9a9a9a] bg-linear-to-br from-white/45 to-white/10'
                : '')
          }
        >
          {a.icon}
        </button>
      ))}
    </div>
    <div className="grid grid-cols-6 content-start gap-x-[6px] gap-y-3 pt-[7px]">
      {tray.map((t) => (
        <button key={t.name} aria-label={t.name} className="flex size-[18px] items-center justify-center">
          {t.icon}
        </button>
      ))}
    </div>
    <div className="flex w-[101px] flex-col items-center pl-1 text-[12px] leading-[22px] text-white">
      <time className="-mt-[2px]">11:29</time>
      <span>quinta-feira</span>
      <span>05/05/2016</span>
    </div>
    <button aria-label="Mostrar área de trabalho" className="w-[15px] border border-[#777] bg-linear-to-b from-[#555] to-[#111]" />
  </footer>
);

export default function App() {
  return (
    <div className="flex h-screen flex-col overflow-hidden bg-white font-['Liberation_Sans',Arial,sans-serif]">
      <div className="shrink-0 border-b border-[#aaa] bg-black font-['Open_Sans','Noto_Sans',sans-serif]">
        <TabStrip />
        <Toolbar />
        <Bookmarks />
      </div>
      <div className="flex min-h-0 flex-1">
        <div className="flex-1 overflow-hidden pl-px">
          <div className="mx-auto flex w-full max-w-[1150px] gap-5">
            <ZoneFile />
            <Sidebar />
          </div>
        </div>
        <Scrollbar />
      </div>
      <div className="shrink-0 font-['Open_Sans','Noto_Sans',sans-serif]">
        <Taskbar />
      </div>
    </div>
  );
}
